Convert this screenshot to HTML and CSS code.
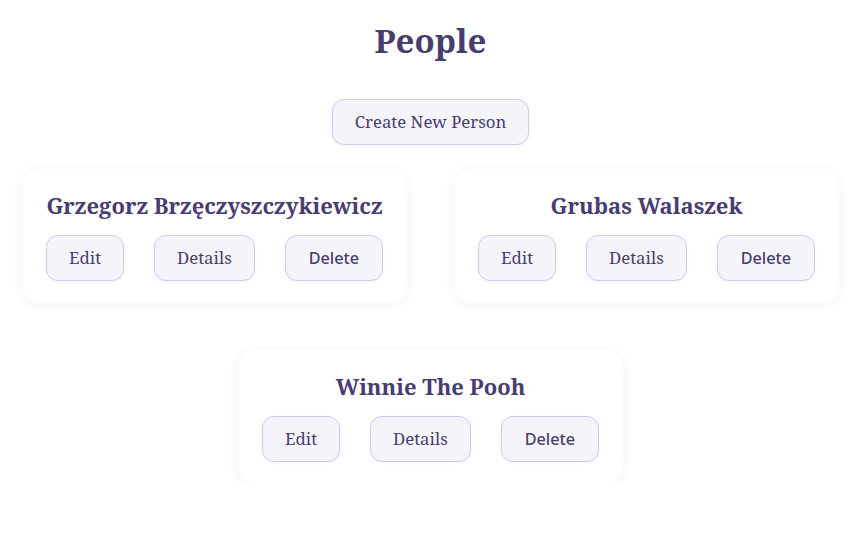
FILE: index.html
```html
<!DOCTYPE html>
<html>
<head>
<meta charset="utf-8">
<link rel="stylesheet" href="styles.css">
</head>
<body>
<main class="page">
  <h1 class="title">People</h1>
  <a class="btn btn-create" href="#">Create New Person</a>
  <section class="cards">
    <article class="card">
      <h2 class="card-name">Grzegorz Brzęczyszczykiewicz</h2>
      <div class="card-actions">
        <a class="btn" href="#">Edit</a>
        <a class="btn" href="#">Details</a>
        <button class="btn btn-delete">Delete</button>
      </div>
    </article>
    <article class="card">
      <h2 class="card-name">Grubas Walaszek</h2>
      <div class="card-actions">
        <a class="btn" href="#">Edit</a>
        <a class="btn" href="#">Details</a>
        <button class="btn btn-delete">Delete</button>
      </div>
    </article>
    <article class="card">
      <h2 class="card-name">Winnie The Pooh</h2>
      <div class="card-actions">
        <a class="btn" href="#">Edit</a>
        <a class="btn" href="#">Details</a>
        <button class="btn btn-delete">Delete</button>
      </div>
    </article>
  </section>
</main>
</body>
</html>
```

FILE: styles.css
```css
html, body {
  margin: 0;
  padding: 0;
  background: #ffffff;
}

body {
  font-family: "Noto Serif", "DejaVu Serif", serif;
  color: #483d70;
}

.page {
  display: flex;
  flex-direction: column;
  align-items: center;
}

.title {
  font-size: 33px;
  font-weight: 700;
  margin: 18px 0 0;
  line-height: 46px;
}

.btn {
  display: inline-block;
  box-sizing: border-box;
  height: 46px;
  padding: 11px 22px;
  line-height: 22px;
  font-size: 16.8px;
  font-family: "Noto Serif", "DejaVu Serif", serif;
  color: #483d70;
  background: #f5f4fa;
  border: 1px solid #d2c8ef;
  border-radius: 12px;
  text-decoration: none;
  white-space: nowrap;
  box-shadow: 0 1px 3px rgba(80, 60, 140, 0.06);
}

.btn-create {
  margin-top: 35px;
}

.btn-delete {
  font-family: "Noto Sans", "DejaVu Sans", sans-serif;
  font-size: 16.2px;
  font-weight: 500;
  padding: 11px 23px;
}

.cards {
  display: flex;
  flex-wrap: wrap;
  justify-content: center;
  column-gap: 47px;
  row-gap: 48px;
  margin-top: 24px;
  padding: 0 22px;
}

.card {
  box-sizing: border-box;
  width: 385px;
  padding: 20px 24px 21px;
  background: #ffffff;
  border-radius: 16px;
  box-shadow: 0 2px 12px rgba(60, 40, 110, 0.06);
}

.card-name {
  margin: 0 0 14px;
  font-size: 22px;
  line-height: 32px;
  font-weight: 700;
  text-align: center;
  white-space: nowrap;
}

.card-actions {
  display: flex;
  justify-content: space-between;
}
```
